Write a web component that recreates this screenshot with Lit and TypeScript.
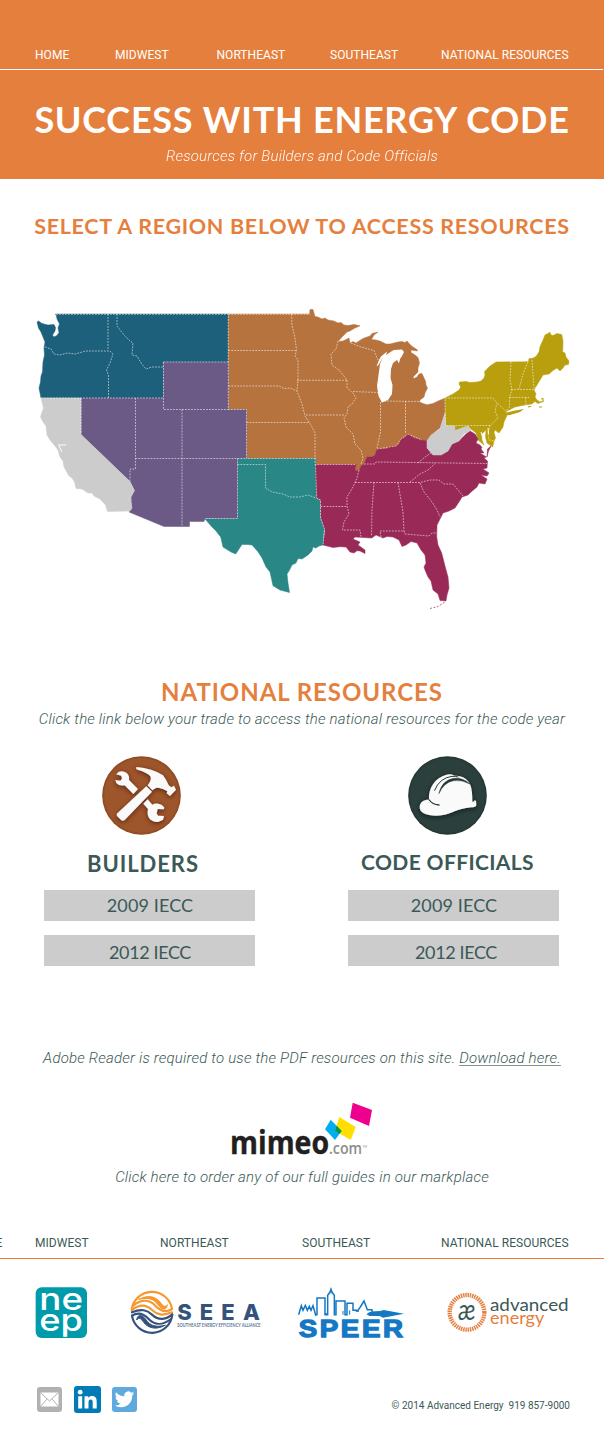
import { LitElement, html, svg, css } from "lit";
import { customElement } from "lit/decorators.js";

interface Region { name: string; fill: string; shape: string; }

const REGIONS: Region[] = [
  { name: "Northwest", fill: "#1d607b", shape: "55.5,314 228.5,314 228.5,362 163.5,362 163.5,398 41,398 40,393 39,388 40.5,382 41,376 42.5,372 43,362 44.5,355 44,348 45,342 43,337 41,332 38.5,328 37,322 38.5,321 42,323.5 48,325 54,324.5 55.5,327.5 55,331 52.5,335 54,337 57,335.5 59,332.5 58,328 59.5,324 57,319 56.5,316" },
  { name: "Midwest", fill: "#b6733e", shape: "228.3,314 309.5,314 310,309.5 313,309.5 314,313 315,316.5 318,317 322,319 325,318 328,320 334,321 338,323 341,322.5 344,325 348,325.5 354,324.5 360,325.8 354,328.5 350,331 347,332 343,336 338,341.5 343,341 349,338 350,343 353,341.5 356,343 359,341 363,338.5 367,337 370,336 372,333.5 378,332 374,335 371.5,339.5 376,340 380,341 386,344 390,344 394,343 398,342 402,341.5 405,342.5 407,341 410,344.5 413,347 417,349.5 417.5,351 411,350 411,352.5 415,355 418,357.5 419.5,363 418,368 418,372 413,377 414,378.5 417,377 419,374 422,373.5 424,378 425.5,381 426,385 427.5,388 425,393 424,397 420,400 419.5,402 423,403.5 427,404.8 433,403.5 438,401 445.5,398 445.5,412 443,419 440,428 436,431 431.7,435 427,441 422,440 414,438 408,434 404,438 401,439 399,444 396,446 389,447 386,449 377,449 375,455 372,457 367,457 364,464 361,466 359,470.5 355,470.5 356,464.5 315.5,464.5 315.5,458.5 246.5,458.5 246.5,409.5 228.3,409.5" },
  { name: "Northeast", fill: "#b99e0e", shape: "445,398 453,394 459,390 460.7,387 459,384 459.5,382 466,381.5 470,382.5 477,382 481,381 484,378 485,375 484.5,371.5 490,366 496,362 528.5,361.7 529,358.5 532,358.5 536,356.5 539,352 540,346.7 543,340 545,335 548,333.5 550,332.3 551,335 553,335.5 557,333.5 561.7,334.5 563,341 562.7,351.7 565,353 566,357 569,361 568.5,364.5 565,365 563,368 560,371 557,368 553,370.5 549,374 543,375 540,380 537,385 535,388 534,390 536,394 535,397 537,400 540,402 543,401 543,399 541,399 543,398 543.5,401.5 538,403.5 535,401.5 531.7,404 522,405.5 515,407 506,411.5 506.7,416 504,422 503,427 499,433 495,430 494,432 495.5,438 494,441 492.7,447 487,443 485.5,437 486,430 481.7,434 482,440 484,445 478,440 476,433 471,429 468,426 462,428 455,431 455,426 445.5,425.5" },
  { name: "South Central", fill: "#298785", shape: "237.5,458.5 315.5,458.5 316,479 316.7,499 320.5,500 320.5,518 324.5,529 323.5,535 323,545 319,546 316,548 313,547 312,551 308,555 302,559 298,558.5 296,563 292,565 289,571 287,574 288,583 289.5,592.5 280,590 273,585.7 270,572 266,567 262,558 258,551.7 252,545 247,544.5 242,544.5 239,549 235.7,554 231,552 223,547 220.7,537 216,531 212,527 205,519 237.5,518.5" },
  { name: "Southeast", fill: "#992a58", shape: "315.5,464.5 356,464.5 355,470.5 359,470.5 361,466 364,464 367,457 372,457 375,455 377,449 386,449 389,447 396,446 399,444 401,439 404,438 408,434 414,438 422,440 427,441 427,448 433,455 441,455 448,451 452,444 459,441 466,434 470,431 475,434 478,439 476,443 480,445 482,447.5 481,449 484,453 480,453 486.5,457 484,458 487.5,461 487,468 483,469 489,473 487,476 481,475 487,479 485,484 479,483 477,487 471,492 468,495 462,497 459,502 455,508 449,511 443,513 440,519 437,525 436.7,536.7 438,545 441.7,553 445,566 448,577 449,588 447,595 446,601 440,600.5 438,594 433,590 431,581 428,577 425,570 424,567 426,563 425,555 421,550 417,543 411,541.5 406,545 402,546.5 399,540 393,537 387,536.5 383,538 376,535 371.7,538 363,537.5 355,537 353,539 360,542 358,545 365,550 365,553.5 360,551 357,550.7 354,553 350,552 346,547 340,546.7 333,547.5 323,545 325,530 321,518 320.7,500 316.7,498" },
  { name: "Southeast shore", fill: "#992a58", shape: "491,446 488.5,451 487,457 487.5,449" },
  { name: "Southwest", fill: "#6c5a86", shape: "81,398 163.5,398 163.5,362 228.3,362 228.3,409.5 246.5,409.5 246.5,458.5 237.5,458.5 237.5,518.5 205,518.5 204,521.5 189.5,521.5 189.5,526.5 164,526.5 129,512 132,508 131,497 134.5,490.5 130,481.5 81,434.5" },
  { name: "California", fill: "#cccccc", shape: "41,398 81,398 81,434.5 130,481.5 134.5,490.5 131,497 131,502 132,508 130,511 107.5,511.5 105.5,505 100,499 94,496 92,493 88,493 82,489 76,488.5 74.5,482 72,478 69,476 64,467 63,461 60,457 58,450 55,446 50,440 47,435 46,426 43,422 40.5,417 42,412 43.5,408 42,402" },
  { name: "West Virginia", fill: "#cccccc", shape: "445,413 445.5,426 455,426 455,430.5 462,428 468,426 471,430 464,434 459,441 452,444 448,451 441,455 433,455 427,448 427,441 431,435 440,429 443,419" },
];

const BORDERS = [
  "56,314.3H228.3V409.5H246.5V458.5H315.5", "228.3,314.3H310", "163.5,362H228.3", "163.5,362V409.5H228.3", "41,398H163.5",
  "108,314V350", "45,347L51,349L54,354L60,355L67,353L75,354L86,351H110L113,354L110,363L106.5,370L108.5,375V398",
  "117,314V326L124,335L130,341L133,343L132,355L137,356L141,363L146,369L152,367H163.5",
  "81,398V434.5", "135.5,398V469H130V481", "182,409.5V526", "135.5,458.5H246.5", "237.5,458.5V518.5H205",
  "237.5,464.5H265.5V488L272,492L283,494L290,497H300L308,495L316,498", "315.5,464.5L316.7,498L320.5,500V518L324.5,529L323,545",
  "228.3,350.5H297", "291.5,314L292,325L295,338L296.5,350L295,356L298,360V380L297,391",
  "228.3,386H279L284,388.5L290,388L297,391L302,404L305,416L311,425L315,433V464.5H355", "246.5,422.5H309", "297,380.3H347", "306,415H344",
  "338,341L336,349L331,354L332,365L340,371L347,380V388L353,393L356,398L352,404L348,407L347,414L344,418L346,427L353,434L355,444L361,450L363,458L361,464",
  "353,391.5L378,392.5", "351,343L361,347L374,350.5L378,360", "380.5,402V432L377,448", "405.5,401V434", "381,401L420,401.5",
  "364,464H375L376,462L487,463.5", "418,463L425,457L431,453", "410,482L420,474L428,470L435,463.5", "355,482.5H420L430,480H439L444,484H453L463,496",
  "420,483L424,492L432,502L437,510L440,517", "398,482.5L403,512L404,531", "374,482.5L372,510L371.5,536", "381,537L380,531H404L405,534L429,536L432,533H437",
  "359,470L357,478L353,487L347,497V506L349,514L344,522L342.5,530H360L361,537", "320.5,506.5H347",
  "445,398H493L497,403L495,411L498,418L490,425.5H445.5Z", "511,362L510,380L512,390L509.5,397V407L506,411L497,403", "528,362L523,374L519,389", "532,360L534,388",
  "511,389.5H534", "509.5,397.5H530", "525.5,397.5L526,405", "490,425L488,433L489,440L494,441",
  "377,449L389,447L396,446L401,439L408,434L422,440",
];

const LAKE = "376.5,366.5 379,360 381,356.5 387,351.5 386,355 392,351 394,350 402,349.5 404,352 402,356 400,359 399,363.5 397,360 393,363 391,369 390.5,378 392.5,385 392,394 388,400 382,402.5 378.5,396 377,386 378.5,375 380,364 383,357 378.5,365";

@customElement("region-map")
export class RegionMap extends LitElement {
  static styles = css`
    :host { display: block; }
    svg { display: block; }
    .border { fill: none; stroke: #fff; stroke-opacity: .55; stroke-width: 1; stroke-dasharray: 1.8 1.2; }
    .shape { stroke-width: .5; }
    .water { fill: #fff; }
    .bay { fill: none; stroke: #fff; stroke-width: 1; }
    .isle { fill: none; stroke-width: 1.1; }
    .keys { stroke-width: .7; }
  `;
  render() {
    return html`<svg width="550" height="320" viewBox="30 300 550 320" role="img" aria-label="Regions">
      ${REGIONS.map(r => svg`<polygon class="shape" points=${r.shape} fill=${r.fill} stroke=${r.fill}></polygon>`)}
      <polygon class="water" points=${LAKE}></polygon>
      <path class="bay" d="M58,445H66M59,446L62,452M488,428L488.5,434M481,432L483,438"></path>
      <path fill="#b99e0e" d="M505,413L515,410.5L524,409L520,412L510,415L506,415.5Z"></path>
      <path class="isle" stroke="#b99e0e" stroke-dasharray="3 1.5" d="M528,407L532,406M539,407H542"></path>
      <path class="isle keys" stroke="#992a58" stroke-dasharray="2 1.5" d="M430,608.5L438,606.5L445,602"></path>
      ${BORDERS.map(b => svg`<path class="border" d=${"M" + b}></path>`)}
    </svg>`;
  }
}

@customElement("trade-card")
export class TradeCard extends LitElement {
  static properties = { kind: {} };
  declare kind: string;
  static styles = css`
    :host { display: flex; flex-direction: column; align-items: center; width: 211px; color: #3b5957; font-family: Lato, sans-serif; }
    svg { display: block; margin-right: 16px; }
    h3 { margin: 13px 13px 10px 0; font-size: 22px; line-height: 32px; font-weight: 700; letter-spacing: .95px; white-space: nowrap; }
    .officials { font-size: 21px; letter-spacing: .37px; margin: 11px 12px 12px 0; }
    .hat { margin-right: 12px; }
    a { display: block; box-sizing: border-box; width: 211px; height: 31px; line-height: 31px; padding-left: 1px; background: #ccc; text-align: center; font-size: 18px; letter-spacing: .12px; }
    a + a { margin-top: 14px; line-height: 34px; letter-spacing: -.38px; }
    .officials ~ a + a { padding-left: 5px; }
  `;
  hammer() {
    return html`<svg width="79" height="79" viewBox="66 33 237 237">
      <defs><filter id="s" x="-20%" y="-20%" width="140%" height="150%"><feDropShadow dx="0" dy="4" stdDeviation="6" flood-color="#3d1c08" flood-opacity=".8"/></filter>
      <radialGradient id="g"><stop offset="0" stop-color="#9d552b"/><stop offset=".93" stop-color="#9d552b"/><stop offset="1" stop-color="#87461f"/></radialGradient></defs>
      <circle cx="184.500" cy="151.500" r="118" fill="url(#g)"/>
      <g fill="#fafafa" filter="url(#s)">
        <path d="M108,88L117,80Q130,77 140,84Q149,92 147,105L174,132L160,147L134,121Q118,124 109,114L106,105L121,107L126,101L124,92Z"/>
        <path d="M203,163L190,176L204,192Q200,211 210,223Q222,233 236,230L249,224L252,213L234,212L230,205L233,192L251,193L253,188Q247,178 234,176Q224,175 217,179Z"/>
        <path d="M199,124L216,140L134,225Q129,229 124,226L111,213Q109,209 112,205Z"/>
        <path d="M169,66Q217,70 249,91Q261,107 266,121L274,127L282,122L288,134L270,153L260,145L262,139Q244,127 229,128L217,136L203,121Q215,105 212,95Q205,84 169,73Z"/>
      </g></svg>`;
  }
  helmet() {
    return html`<svg class="hat" width="79" height="79" viewBox="984 33 237 237">
      <defs><filter id="s" x="-20%" y="-20%" width="140%" height="150%"><feDropShadow dx="0" dy="4" stdDeviation="6" flood-color="#0b1715" flood-opacity=".85"/></filter>
      <radialGradient id="g"><stop offset="0" stop-color="#2b3f3c"/><stop offset=".93" stop-color="#2b3f3c"/><stop offset="1" stop-color="#223431"/></radialGradient></defs>
      <circle cx="1102.500" cy="151.500" r="118" fill="url(#g)"/>
      <path filter="url(#s)" fill="#fafafa" d="M1047,164C1044,130 1066,97 1099,89Q1114,86 1124,92C1148,91 1166,104 1171,120Q1177,135 1177,170Q1184,172 1184,165L1188,168L1189,181Q1187,187 1174,187C1128,190 1112,212 1070,212C1036,212 1018,201 1019,185C1020,170 1033,163 1047,164Z"/>
      <g fill="none" stroke="#263936" stroke-linecap="round">
        <path stroke-width="3" d="M1064,136Q1078,99 1116,94Q1126,93 1134,96"/>
        <path fill="#263936" stroke-width="1.500" d="M1077,145Q1086,105 1123,100Q1150,98 1170,117Q1145,103 1120,107Q1092,112 1077,145Z"/>
        <path stroke-width="4" d="M1048,165Q1057,179 1077,180"/>
      </g></svg>`;
  }
  render() {
    const b = this.kind === "builders";
    return html`${b ? this.hammer() : this.helmet()}
      <h3 class=${b ? "builders" : "officials"}>${b ? "BUILDERS" : "CODE OFFICIALS"}</h3>
      <a>2009 IECC</a><a>2012 IECC</a>`;
  }
}

@customElement("app-root")
export class AppRoot extends LitElement {
  static styles = css`
    :host { display: block; width: 604px; height: 1446px; overflow: hidden; background: #fff; color: #3b5957; font-family: Lato, sans-serif; }
    h1, h2, p { margin: 0; text-align: center; white-space: nowrap; }
    header { height: 179px; background: #e57f3e; color: #fff; }
    nav { display: grid; font: 400 12px/29px Roboto, sans-serif; letter-spacing: .04px; white-space: nowrap; }
    .top { height: 69px; box-sizing: border-box; padding: 41px 0 0 35px; grid-template-columns: 80px 101.500px 113.500px 111px 1fr; }
    .rule { height: 1px; margin-right: 1px; background: #fff; }
    h1 { padding-top: 30px; font-size: 36px; line-height: 39px; font-weight: 700; letter-spacing: .75px; }
    .it { font-family: Roboto, sans-serif; font-style: italic; font-weight: 300; font-size: 15px; line-height: 24px; letter-spacing: .2px; }
    .sub { margin-top: 5px; opacity: .95; }
    h2 { color: #e57f3e; font-weight: 700; }
    .select { margin-top: 32px; font-size: 21.500px; line-height: 30px; letter-spacing: .69px; }
    region-map { margin: 59px 0 0 30px; }
    .national { margin-top: 56px; font-size: 24px; line-height: 32px; letter-spacing: .95px; }
    .hint { margin-top: -1px; }
    .trades { display: flex; justify-content: space-between; padding: 0 45px 0 44px; margin-top: 25px; }
    .adobe { margin-top: 80px; }
    .adobe a { text-decoration: underline; text-decoration-thickness: 1px; text-decoration-color: #82938f; text-underline-offset: 2px; }
    svg { display: block; flex: none; overflow: visible; }
    .mimeo { margin: 32px 0 0 220px; }
    .order { margin-top: 5px; }
    .bottom { margin: 38px 0 0 -32px; padding-top: 2px; grid-template-columns: 67px 125px 142px 139px 1fr; }
    .line { height: 1px; background: #e57f3e; }
    .logos { display: flex; align-items: flex-start; height: 60px; margin-top: 24px; padding-left: 35px; }
    .neep { margin-right: 41.700px; }
    .seea { margin: 4.300px 35.600px 0 0; }
    .speer { margin-right: 41.700px; }
    .ae { margin-top: -1px; }
    footer { display: flex; align-items: center; justify-content: space-between; margin-top: 43px; padding: 0 34px 0 37px; }
    .social { display: flex; align-items: center; gap: 11.500px; }
    .copy { font: 400 10px/14px Roboto, sans-serif; white-space: pre; padding-top: 12px; }
  `;

  swirl(color: string, turn: number) {
    return svg`<g fill="none" stroke-width="6.500" stroke=${color} stroke-linecap="round" transform=${`translate(318 168) rotate(${turn} 77 80)`}>
        <path d="M16,74A61,61 0 0 1 137,70"></path>
        <path d="M17,73C42,53 62,59 77,73S108,92 137,80"></path>
        <path d="M20,60C48,38 72,44 87,60S118,82 137,70"></path>
        <path fill=${color} stroke-width="3" d="M38,41C66,25 90,34 102,50C110,62 116,66 123,57C121,75 106,74 96,59C82,38 65,35 38,41Z"></path>
      </g>`;
  }

  seea() {
    return html`<svg class="seea" width="133" height="50" viewBox="329 172 399 150">
      ${this.swirl("#f6982f", 0)}${this.swirl("#35527d", 180)}
      <g fill="#35527d" font-family="Inter" font-weight="800" font-size="66">
        <text x="471" y="270">S</text><text x="538" y="270">E</text><text x="603" y="270">E</text><text x="668" y="270">A</text>
      </g>
      <text x="471" y="291" fill="#5c7396" font-family="Lato" font-size="15" font-weight="700" textLength="250" lengthAdjust="spacingAndGlyphs">SOUTHEAST ENERGY EFFICIENCY ALLIANCE</text>
    </svg>`;
  }

  render() {
    return html`
      <header>
        <nav class="top"><a>HOME</a><a>MIDWEST</a><a>NORTHEAST</a><a>SOUTHEAST</a><a>NATIONAL RESOURCES</a></nav>
        <div class="rule"></div>
        <h1>SUCCESS WITH ENERGY CODE</h1>
        <p class="it sub">Resources for Builders and Code Officials</p>
      </header>
      <h2 class="select">SELECT A REGION BELOW TO ACCESS RESOURCES</h2>
      <region-map></region-map>
      <h2 class="national">NATIONAL RESOURCES</h2>
      <p class="it hint">Click the link below your trade to access the national resources for the code year</p>
      <section class="trades"><trade-card kind="builders"></trade-card><trade-card kind="officials"></trade-card></section>
      <p class="it adobe">Adobe Reader is required to use the PDF resources on this site. <a>Download here.</a></p>
      <svg class="mimeo" width="160" height="58" viewBox="220 1102 160 58">
        <text x="230" y="1153.500" fill="#231f20" font-family="Open Sans" font-weight="700" font-size="32" stroke="#231f20" stroke-width=".4" textLength="99" lengthAdjust="spacingAndGlyphs">mimeo</text>
        <text x="329" y="1153.500" fill="#8b8d8f" font-family="Open Sans" font-size="16" font-weight="600" textLength="33" lengthAdjust="spacingAndGlyphs">.com</text>
        <text x="362.500" y="1148" fill="#8b8d8f" font-family="Lato" font-size="3">TM</text>
        <polygon fill="#ec008c" points="352.700,1102.700 372,1110 369,1126 350,1117.700"/>
        <polygon fill="#00aeef" points="330.700,1119.700 341.700,1131 335,1140 325,1129.300"/>
        <polygon fill="#ffde00" points="339.300,1117 355.700,1127 350.700,1140 335,1130.700"/>
        <polygon fill="#00955a" points="336.500,1125.500 341.700,1131 339.500,1134 335,1130.700"/>
      </svg>
      <p class="it order">Click here to order any of our full guides in our markplace</p>
      <nav class="bottom"><a>HOME</a><a>MIDWEST</a><a>NORTHEAST</a><a>SOUTHEAST</a><a>NATIONAL RESOURCES</a></nav>
      <div class="line"></div>
      <div class="logos">
        <svg class="neep" width="53" height="55" viewBox="45 159 159 165">
          <rect x="47" y="172" width="154" height="152" rx="18" fill="#009baa"/>
          <g fill="#fff" font-family="Inter" font-weight="500" font-size="90">
            <text x="58" y="241" textLength="131" lengthAdjust="spacingAndGlyphs">ne</text>
            <text x="58" y="302" textLength="131" lengthAdjust="spacingAndGlyphs">ep</text>
          </g>
        </svg>
        ${this.seea()}
        <svg class="speer" width="107" height="56" viewBox="25 158 321 168">
          <path fill="none" stroke="#1478c4" stroke-width="4.500" stroke-linejoin="miter" d="M27,253L35,226L40,240L47,225L53,240L59,228L64,240L70,226L78,254L82,253V203H106V253H114V195L119,188L124,178L129,188L134,195V253H139V212H166V253H172V219H190V240H205L212,230L223,212L233,238H247V246H270"/>
          <path fill="#1478c4" d="M240,245L272,242L282,239L343,250L280,262L270,257H240L230,252Z"/>
          <path fill="none" stroke="#1478c4" stroke-width="3" d="M124,172V190M106,250H112M160,242V253M180,240V253M198,243H208"/>
          <text x="27" y="319" fill="#1478c4" stroke="#1478c4" stroke-width="4" font-family="Liberation Sans" font-weight="700" font-size="73" letter-spacing="7" textLength="321" lengthAdjust="spacingAndGlyphs">SPEER</text>
        </svg>
        <svg class="ae" width="124" height="60" viewBox="471 156 372 180">
          <circle cx="531" cy="247" r="52" fill="none" stroke="#e57f3e" stroke-width="13" stroke-dasharray="4.400 2.407"/>
          <text x="505" y="271" fill="#3b5957" font-family="Lato" font-style="italic" font-size="84" textLength="52" lengthAdjust="spacingAndGlyphs">æ</text>
          <text x="600" y="243" fill="#3b5957" font-family="Lato" font-size="53" textLength="236" lengthAdjust="spacingAndGlyphs">advanced</text>
          <text x="600" y="281" fill="#e57f3e" font-family="Lato" font-size="53" textLength="163" lengthAdjust="spacingAndGlyphs">energy</text>
        </svg>
      </div>
      <footer>
        <div class="social">
          <svg width="25" height="25" viewBox="0 0 25 25"><rect width="25" height="25" rx="3" fill="#b1b1b1"/><rect x="3.500" y="5.500" width="18" height="14" fill="#fff"/><path fill="none" stroke="#b1b1b1" stroke-width="1" d="M3.500,5.500L12.500,14L21.500,5.500M3.500,19.500L10,12M21.500,19.500L15,12"/></svg>
          <svg width="27" height="27" viewBox="0 0 27 27"><rect width="27" height="27" rx="3" fill="#007bb6"/><circle cx="6.200" cy="6.200" r="2.400" fill="#fff"/><path fill="#fff" d="M4.200,10.300H8.200V22.500H4.200ZM10.500,10.300H14.300V12C15.200,10.600 16.500,10 18.200,10C21.600,10 22.700,12.200 22.700,15.600V22.500H18.700V16.300C18.700,14.500 18.300,13.400 16.800,13.400C15.100,13.400 14.500,14.600 14.500,16.400V22.500H10.500Z"/></svg>
          <svg width="25" height="25" viewBox="0 0 25 25"><rect width="25" height="25" rx="3" fill="#5ea9dd"/><path fill="#fff" transform="translate(2.800 2.600) scale(.81)" d="M23.950 4.570a10 10 0 0 1-2.820.77 4.960 4.960 0 0 0 2.160-2.720c-.950.550-2 .950-3.130 1.180a4.920 4.920 0 0 0-8.380 4.480C7.690 8.090 4.070 6.130 1.640 3.160a4.920 4.920 0 0 0 1.520 6.570 4.900 4.900 0 0 1-2.230-.61v.060a4.920 4.920 0 0 0 3.950 4.830 5 5 0 0 1-2.210.080 4.940 4.940 0 0 0 4.600 3.420A9.870 9.870 0 0 1 0 19.540a14 14 0 0 0 7.550 2.210c9.050 0 14-7.500 14-13.980l-.020-.63a9.940 9.940 0 0 0 2.420-2.570z"/></svg>
        </div>
        <div class="copy">© 2014 Advanced Energy  919 857-9000</div>
      </footer>`;
  }
}
